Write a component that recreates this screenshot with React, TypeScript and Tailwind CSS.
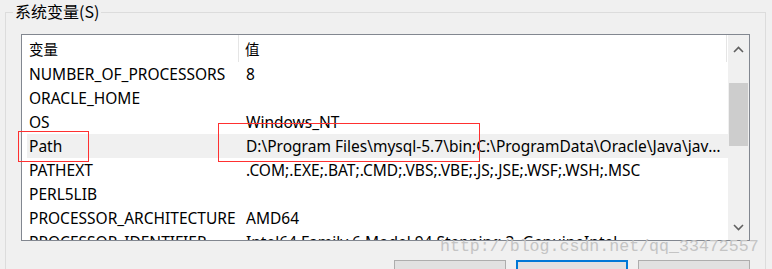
import React from "react";

const rows: { name: string; value: string; selected?: boolean }[] = [
  { name: "NUMBER_OF_PROCESSORS", value: "8" },
  { name: "ORACLE_HOME", value: "" },
  { name: "OS", value: "Windows_NT" },
  {
    name: "Path",
    value:
      "D:\\Program Files\\mysql-5.7\\bin;C:\\ProgramData\\Oracle\\Java\\javapath;C:\\Windows\\system32",
    selected: true,
  },
  { name: "PATHEXT", value: ".COM;.EXE;.BAT;.CMD;.VBS;.VBE;.JS;.JSE;.WSF;.WSH;.MSC" },
  { name: "PERL5LIB", value: "" },
  { name: "PROCESSOR_ARCHITECTURE", value: "AMD64" },
  { name: "PROCESSOR_IDENTIFIER", value: "Intel64 Family 6 Model 94 Stepping 3, GenuineIntel" },
];

export default function App() {
  return (
    <div
      className="relative w-[772px] h-[269px] overflow-hidden bg-[#f0f0f0] text-black"
      style={{ fontFamily: '"Noto Sans", "Noto Sans CJK SC", sans-serif' }}
    >
      <div className="pt-[12px] pl-[5px]">
        <div className="relative w-[761px] h-[300px] border border-[#dcdcdc]">
          <span
            className="absolute left-[7px] top-[-13px] px-[2px] bg-[#f0f0f0] text-[16px] leading-[22px]"
            style={{ fontFamily: '"Noto Sans CJK SC", "Noto Sans", sans-serif' }}
          >
            系统变量(S)
          </span>

          <div className="ml-[15px] mt-[21px] w-[729px] h-[207px] border border-[#828790] bg-white flex">
            <div className="flex-1 flex flex-col overflow-hidden">
              <div className="h-[27px] shrink-0 flex text-[14.5px]">
                <div
                  className="w-[217px] pl-[7px] pt-[3px] border-r border-[#e5e5e5]"
                  style={{ fontFamily: '"Noto Sans CJK SC", sans-serif' }}
                >
                  变量
                </div>
                <div
                  className="flex-1 pl-[6px] pt-[3px] border-r border-[#e5e5e5] mr-[1px]"
                  style={{ fontFamily: '"Noto Sans CJK SC", sans-serif' }}
                >
                  值
                </div>
              </div>
              {rows.map((r) => (
                <div
                  key={r.name}
                  className={`ml-[5px] h-[24px] shrink-0 flex items-center text-[15.5px] leading-[24px] ${
                    r.selected ? "bg-[#f0f0f0]" : ""
                  }`}
                >
                  <div className="w-[213px] pl-[2px] whitespace-nowrap overflow-hidden">{r.name}</div>
                  <div className="flex-1 min-w-0 pl-[6px] pr-[6px] whitespace-nowrap overflow-hidden text-ellipsis">
                    {r.value}
                  </div>
                </div>
              ))}
            </div>
            <div className="w-[21px] shrink-0 bg-[#f0f0f0] flex flex-col items-center">
              <div className="h-[25px] w-full flex items-center justify-center pt-[4px]">
                <svg width="11" height="7" viewBox="0 0 11 7">
                  <path d="M1 6 L5.5 1.5 L10 6" fill="none" stroke="#606060" strokeWidth="1.6" />
                </svg>
              </div>
              <div className="mt-[23px] w-[19px] h-[63px] bg-[#cdcdcd]" />
              <div className="flex-1" />
              <div className="h-[20px] w-full flex items-center justify-center pb-[6px]">
                <svg width="11" height="7" viewBox="0 0 11 7">
                  <path d="M1 1 L5.5 5.5 L10 1" fill="none" stroke="#606060" strokeWidth="1.6" />
                </svg>
              </div>
            </div>
          </div>

          <div className="mt-[19px] w-[744px] flex justify-end gap-[10px]">
            <div className="w-[112px] h-[24px] bg-[#e1e1e1] border border-[#adadad]" />
            <div className="w-[112px] h-[24px] bg-[#e1e1e1] border-2 border-[#0078d7]" />
            <div className="w-[112px] h-[24px] bg-[#e1e1e1] border border-[#adadad]" />
          </div>
        </div>
      </div>

      {/* red annotation boxes */}
      <div className="absolute left-[18px] top-[131px] w-[71px] h-[31px] border border-[#ff3030]" />
      <div className="absolute left-[218px] top-[123px] w-[262px] h-[39px] border border-[#ff3030]" />

      {/* watermark */}
      <div
        className="absolute left-[440px] top-[235px] text-[16.6px] leading-[24px] text-[#c4c4c4] whitespace-nowrap"
        style={{ fontFamily: '"Liberation Mono", monospace' }}
      >
        http://blog.csdn.net/qq_33472557
      </div>
    </div>
  );
}
